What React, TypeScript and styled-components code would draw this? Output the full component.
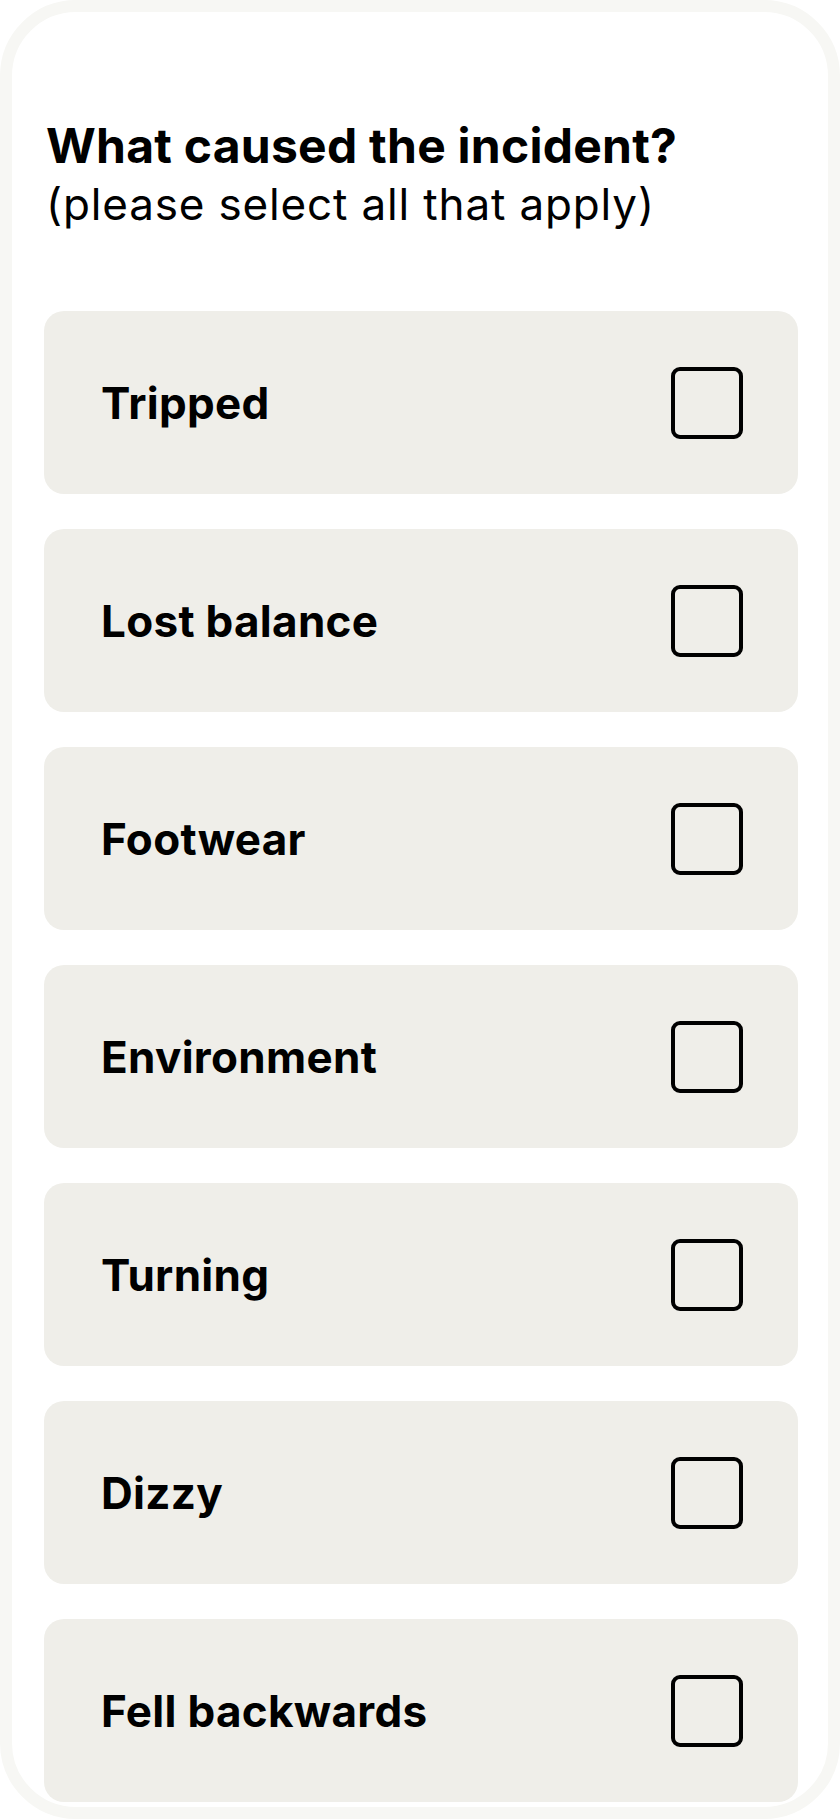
import React, { useState } from "react";
import styled, { createGlobalStyle } from "styled-components";

const GlobalStyle = createGlobalStyle`
  html, body {
    margin: 0;
    padding: 0;
    background: #ffffff;
  }
  body {
    font-family: Inter, "Noto Sans", "Liberation Sans", sans-serif;
    color: #000;
    -webkit-font-smoothing: antialiased;
  }
  * { box-sizing: border-box; }
`;

const Frame = styled.div`
  width: 840px;
  height: 1819px;
  border: 12px solid #f7f7f4;
  border-radius: 76px;
  background: #ffffff;
  padding: 105px 30px 0 32px;
  overflow: hidden;
`;

const Header = styled.header`
  padding-left: 2px;
  margin-bottom: 77px;
`;

const Title = styled.h1`
  margin: 0;
  font-size: 48px;
  line-height: 57px;
  font-weight: 700;
  letter-spacing: 0.25px;
`;

const Subtitle = styled.p`
  margin: 0;
  font-size: 44px;
  line-height: 60px;
  font-weight: 400;
  letter-spacing: 0.85px;
`;

const List = styled.div`
  display: flex;
  flex-direction: column;
  gap: 35px;
`;

const Option = styled.label`
  display: flex;
  align-items: center;
  justify-content: space-between;
  height: 183px;
  padding: 0 55px 0 57px;
  background: #efeee9;
  border-radius: 20px;
  cursor: pointer;
`;

const Label = styled.span`
  font-size: 44px;
  font-weight: 700;
  letter-spacing: 0.3px;
`;

const Box = styled.span<{ $checked: boolean }>`
  width: 72px;
  height: 72px;
  border: 4px solid #000;
  border-radius: 9px;
  background: ${(p) => (p.$checked ? "#000" : "transparent")};
  flex-shrink: 0;
`;

const HiddenInput = styled.input`
  display: none;
`;

const options = [
  "Tripped",
  "Lost balance",
  "Footwear",
  "Environment",
  "Turning",
  "Dizzy",
  "Fell backwards",
];

export default function App() {
  const [checked, setChecked] = useState<Record<string, boolean>>({});
  return (
    <>
      <GlobalStyle />
      <Frame>
        <Header>
          <Title>What caused the incident?</Title>
          <Subtitle>(please select all that apply)</Subtitle>
        </Header>
        <List>
          {options.map((o) => (
            <Option key={o}>
              <Label>{o}</Label>
              <HiddenInput
                type="checkbox"
                checked={!!checked[o]}
                onChange={() => setChecked((c) => ({ ...c, [o]: !c[o] }))}
              />
              <Box $checked={!!checked[o]} />
            </Option>
          ))}
        </List>
      </Frame>
    </>
  );
}
